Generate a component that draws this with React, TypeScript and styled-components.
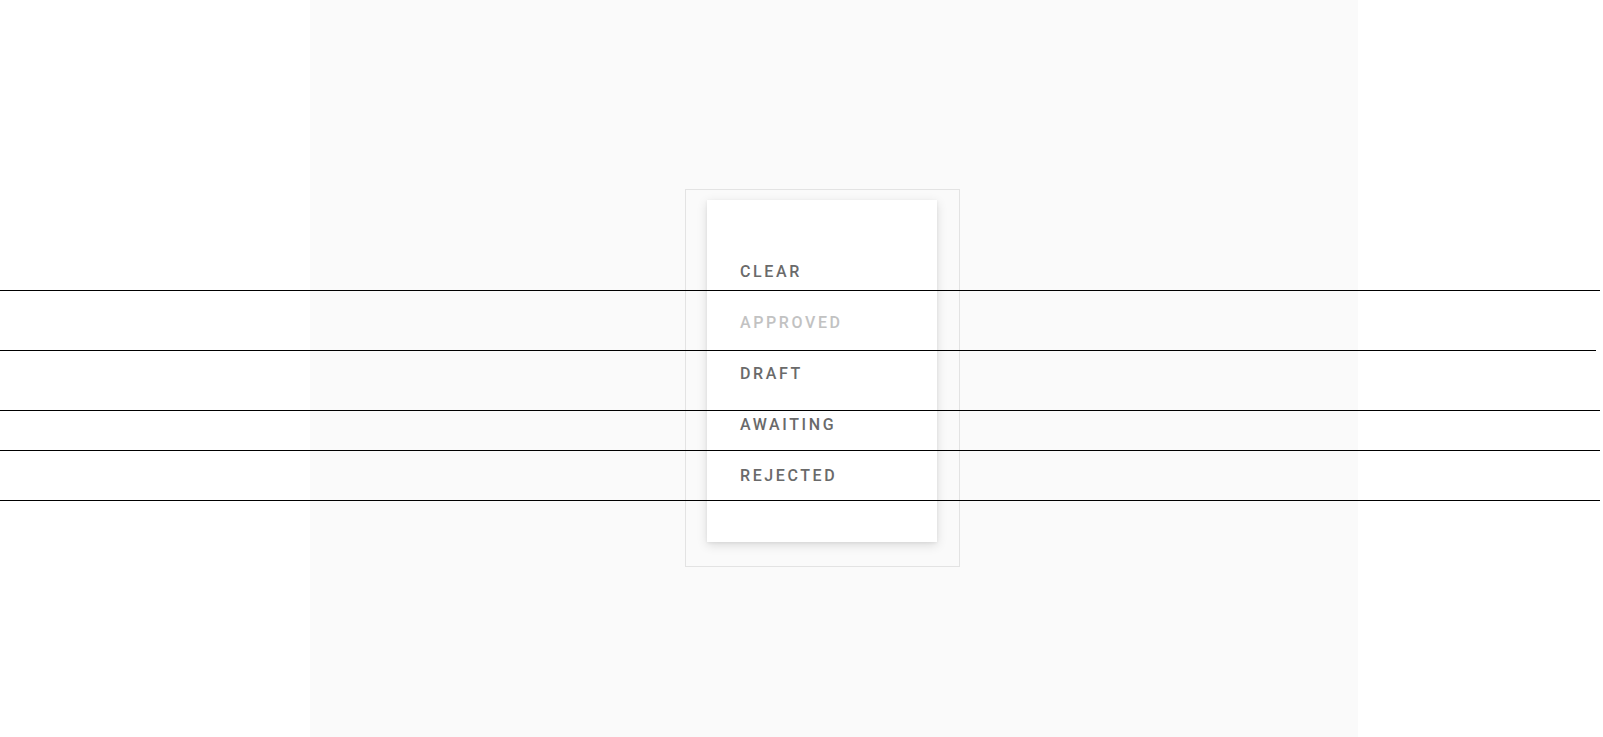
import React from "react";
import styled, { createGlobalStyle } from "styled-components";

const GlobalStyle = createGlobalStyle`
  html, body {
    margin: 0;
    padding: 0;
    background: #ffffff;
    font-family: Roboto, "Liberation Sans", sans-serif;
  }
  #root {
    min-height: 737px;
  }
`;

const Page = styled.div`
  position: relative;
  display: flex;
  width: 1603px;
  height: 737px;
  padding-left: 310px;
  box-sizing: border-box;
  overflow: hidden;
`;

const Canvas = styled.div`
  width: 1048px;
  height: 737px;
  background: #fafafa;
  box-sizing: border-box;
  padding: 189px 0 0 375px;
`;

const Frame = styled.div`
  width: 275px;
  height: 378px;
  box-sizing: border-box;
  border: 1px solid #e3e3e3;
  padding: 10px 22px 0 21px;
`;

const Menu = styled.ul`
  list-style: none;
  margin: 0;
  width: 230px;
  height: 342px;
  box-sizing: border-box;
  padding: 46px 0 0 33px;
  background: #ffffff;
  box-shadow: 0 3px 10px rgba(0, 0, 0, 0.13), 0 1px 3px rgba(0, 0, 0, 0.06);
`;

const Item = styled.li<{ $disabled?: boolean }>`
  height: 51px;
  line-height: 51px;
  font-family: Roboto, "Liberation Sans", sans-serif;
  font-size: 16px;
  font-weight: 500;
  letter-spacing: 2.6px;
  text-transform: uppercase;
  color: ${(p) => (p.$disabled ? "#c2c2c2" : "#6a6a6a")};
  cursor: ${(p) => (p.$disabled ? "default" : "pointer")};
`;

const Rule = styled.div<{ $top: number; $width: number }>`
  position: absolute;
  left: 0;
  top: ${(p) => p.$top}px;
  width: ${(p) => p.$width}px;
  height: 1px;
  background: #000000;
`;

const items = [
  { label: "Clear" },
  { label: "Approved", disabled: true },
  { label: "Draft" },
  { label: "Awaiting" },
  { label: "Rejected" },
];

const rules = [
  { top: 290, width: 1600 },
  { top: 350, width: 1596 },
  { top: 410, width: 1600 },
  { top: 450, width: 1600 },
  { top: 500, width: 1600 },
];

export default function App() {
  return (
    <>
      <GlobalStyle />
      <Page>
        <Canvas>
          <Frame>
            <Menu>
              {items.map((it) => (
                <Item key={it.label} $disabled={it.disabled}>
                  {it.label}
                </Item>
              ))}
            </Menu>
          </Frame>
        </Canvas>
        {rules.map((r) => (
          <Rule key={r.top} $top={r.top} $width={r.width} />
        ))}
      </Page>
    </>
  );
}
